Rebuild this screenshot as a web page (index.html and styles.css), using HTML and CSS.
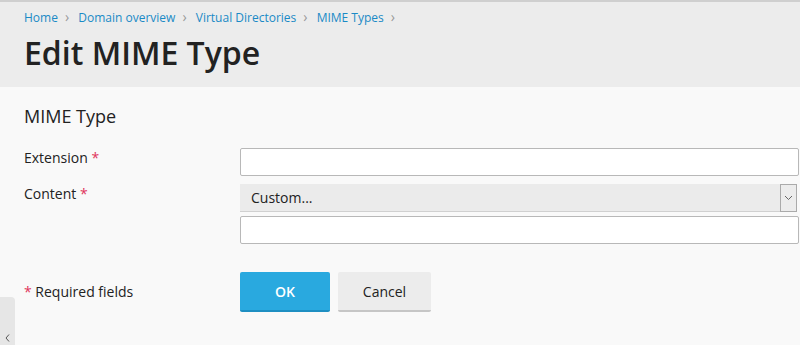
FILE: index.html
```html
<!DOCTYPE html>
<html lang="en">
<head>
  <meta charset="UTF-8" />
  <title>Edit MIME Type</title>
  <link rel="stylesheet" href="styles.css">
</head>
<body>
  <header class="page-header">
    <nav class="breadcrumbs">
      <a href="#">Home</a><span class="sep">&rsaquo;</span>
      <a href="#">Domain overview</a><span class="sep">&rsaquo;</span>
      <a href="#">Virtual Directories</a><span class="sep">&rsaquo;</span>
      <a href="#">MIME Types</a><span class="sep">&rsaquo;</span>
    </nav>
    <h1>Edit MIME Type</h1>
  </header>

  <main class="content">
    <h2>MIME Type</h2>
    <form class="form">
      <div class="row">
        <label class="label">Extension <span class="req">*</span></label>
        <div class="field">
          <input type="text" class="input" />
        </div>
      </div>
      <div class="row">
        <label class="label">Content <span class="req">*</span></label>
        <div class="field">
          <div class="select">
            <span>Custom...</span>
            <span class="arrow">
              <svg width="9" height="6" viewBox="0 0 9 6"><path d="M1 1l3.5 3.5L8 1" fill="none" stroke="#666" stroke-width="1"/></svg>
            </span>
          </div>
          <input type="text" class="input" />
        </div>
      </div>
      <div class="row actions">
        <div class="label"><span class="req">*</span> Required fields</div>
        <div class="buttons">
          <button type="button" class="btn btn-ok">OK</button>
          <button type="button" class="btn btn-cancel">Cancel</button>
        </div>
      </div>
    </form>
  </main>

  <div class="side-tab">
    <svg width="5" height="8" viewBox="0 0 5 8"><path d="M4 0.5L1 4l3 3.5" fill="none" stroke="#555" stroke-width="1"/></svg>
  </div>
</body>
</html>
```

FILE: styles.css
```css
body {
  margin: 0;
  font-family: 'Open Sans', sans-serif;
  background: #f9f9f9;
  color: #222;
  height: 345px;
  overflow: hidden;
  position: relative;
}

.page-header {
  background: #ececec;
  border-top: 2px solid #cfcfcf;
  padding: 6px 24px 0;
  height: 79px;
}

.breadcrumbs {
  font-size: 12px;
  line-height: 18px;
}

.breadcrumbs a {
  color: #1a8ac6;
  text-decoration: none;
}

.breadcrumbs .sep {
  color: #999;
  margin: 0 6px 0 7px;
  font-size: 14px;
}

.page-header h1 {
  margin: 6px 0 0;
  font-size: 32px;
  font-weight: 600;
  line-height: 40px;
  color: #222;
}

.content {
  padding: 16px 1px 0 24px;
}

.content h2 {
  margin: 0 0 19px;
  font-size: 18px;
  font-weight: 400;
  line-height: 26px;
}

.row {
  display: flex;
  margin-bottom: 8px;
}

.label {
  width: 216px;
  font-size: 14px;
  line-height: 20px;
}

.req {
  color: #e0365c;
}

.field {
  flex: 1;
  display: flex;
  flex-direction: column;
  gap: 4px;
}

.input {
  box-sizing: border-box;
  height: 28px;
  border: 1px solid #b8b8b8;
  border-radius: 2px;
  background: #fff;
  margin: 0;
}

.select {
  box-sizing: border-box;
  height: 28px;
  display: flex;
  align-items: center;
  justify-content: space-between;
  background: #ebebeb;
  border-bottom: 1px solid #d0d0d0;
  padding-left: 11px;
  font-size: 14px;
  margin-right: 2px;
}

.select .arrow {
  box-sizing: border-box;
  width: 17px;
  height: 28px;
  border: 1px solid #aaa;
  display: flex;
  align-items: center;
  justify-content: center;
  background: #ececec;
}

.actions {
  margin-top: 28px;
  align-items: center;
}

.buttons {
  display: flex;
  gap: 8px;
}

.btn {
  font-family: inherit;
  font-size: 14px;
  height: 40px;
  border: none;
  border-radius: 2px;
  cursor: pointer;
}

.btn-ok {
  width: 90px;
  background: #29a9df;
  border-bottom: 2px solid #1e8fc2;
  color: #fff;
  font-weight: 600;
}

.btn-cancel {
  width: 93px;
  background: #ececec;
  border-bottom: 2px solid #c6c6c6;
  color: #222;
}

.side-tab {
  position: absolute;
  left: 0;
  top: 297px;
  width: 15px;
  height: 60px;
  background: #e6e6e6;
  border-top-right-radius: 4px;
  display: flex;
  justify-content: center;
  align-items: flex-start;
  padding-top: 37px;
  box-sizing: border-box;
}
```
